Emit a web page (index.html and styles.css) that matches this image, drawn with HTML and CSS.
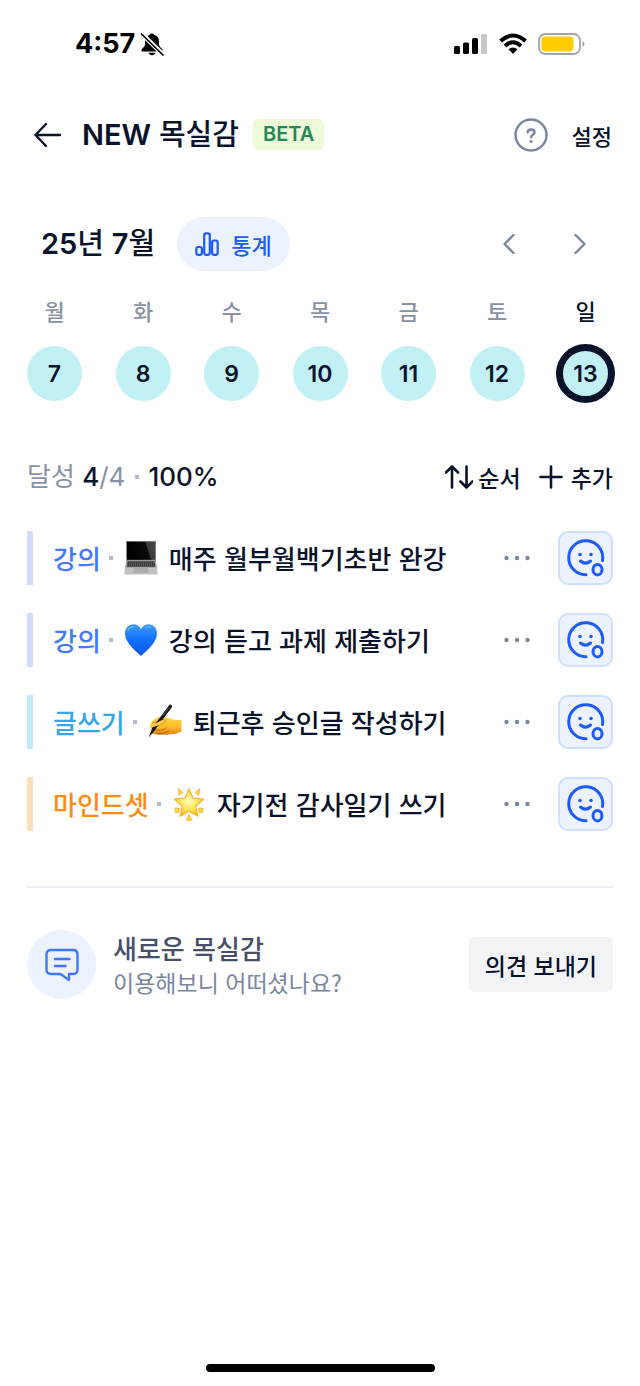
FILE: index.html
```html
<!DOCTYPE html>
<html lang="ko">
<head>
<meta charset="utf-8">
<meta name="viewport" content="width=device-width, initial-scale=1">
<title>NEW 목실감</title>
<link rel="stylesheet" href="styles.css">
</head>
<body>
<svg class="defs" width="0" height="0" aria-hidden="true">
  <defs>
    <linearGradient id="g-heart" x1="0" y1="0" x2="0" y2="1"><stop offset="0" stop-color="#3f9bff"/><stop offset=".45" stop-color="#1573fb"/><stop offset="1" stop-color="#0a55ee"/></linearGradient>
    <linearGradient id="g-hand" x1="0" y1="0" x2="0" y2="1"><stop offset="0" stop-color="#ffd84a"/><stop offset=".6" stop-color="#fdb925"/><stop offset="1" stop-color="#dd8412"/></linearGradient>
    <radialGradient id="g-star" cx=".5" cy=".45" r=".55"><stop offset="0" stop-color="#fffbc4"/><stop offset=".55" stop-color="#ffe75a"/><stop offset="1" stop-color="#f9b81f"/></radialGradient>
    <linearGradient id="g-screen" x1="0" y1="0.2" x2="1" y2="0"><stop offset="0" stop-color="#000"/><stop offset=".66" stop-color="#0b0b0b"/><stop offset=".67" stop-color="#3a3a3c"/><stop offset="1" stop-color="#4a4a4c"/></linearGradient>
    <symbol id="face" viewBox="0 0 40 40">
      <g fill="none" stroke="#1d5bff" stroke-width="3" stroke-linecap="round">
        <path d="M20 36.700A17 17 0 1 1 36.500 22.500"/>
        <path d="M14.500 23Q19.500 27.300 24.500 23"/>
        <ellipse cx="31.500" cy="31.700" rx="4.500" ry="5.200"/>
      </g>
      <circle cx="14" cy="16.500" r="1.800" fill="#1d5bff"/><circle cx="25" cy="16.500" r="1.800" fill="#1d5bff"/>
    </symbol>
    <symbol id="dots" viewBox="0 0 28 8"><g fill="#7b859c"><circle cx="3.500" cy="4" r="2.200"/><circle cx="14" cy="4" r="2.200"/><circle cx="24.500" cy="4" r="2.200"/></g></symbol>
  </defs>
</svg>
<div class="screen">
  <div class="status">
    <div class="status-left">
      <span class="time">4:57</span>
      <svg width="24" height="24" viewBox="0 0 24 24" aria-hidden="true"><path d="M12 1.500c-.9 0-1.700.5-2.100 1.300C6.600 3.700 5 6.300 5 9.500v2.700c0 2.300-1.800 3.300-3.300 5-.9 1-.5 2.200.9 2.200h18.800c1.400 0 1.800-1.200.9-2.200-1.500-1.700-3.300-2.700-3.300-5V9.500c0-3.200-1.600-5.800-4.900-6.700-.4-.8-1.200-1.300-2.100-1.300zM8.500 20.800h7c-.5 1.600-1.900 2.400-3.500 2.400s-3-.8-3.500-2.400z"/><path d="M1.500 1.500L24 23.500" stroke="#fff" stroke-width="4.500"/><path d="M1.500 2L23 23" stroke="#000" stroke-width="1.700" stroke-linecap="round"/></svg>
    </div>
    <div class="status-right">
      <svg width="34" height="22" viewBox="0 0 34 22" aria-hidden="true"><rect x="0" y="13" width="6" height="8" rx="1.500"/><rect x="9" y="9.500" width="6" height="11.500" rx="1.500"/><rect x="18" y="5" width="6" height="16" rx="1.500"/><rect x="27" y="1" width="6" height="20" rx="1.500" fill="#c8c8ca"/></svg>
      <svg width="28" height="22" viewBox="0 0 28 22" aria-hidden="true"><g fill="none" stroke="#000" stroke-width="4"><path d="M1.500 8Q14-3 26.500 8"/><path d="M6 13Q14 5.500 22 13"/></g><path d="M9.500 16.200Q14 12.800 18.500 16.200L14 21z"/></svg>
      <svg width="48" height="22" viewBox="0 0 48 22" aria-hidden="true"><rect x="1" y="1" width="41" height="20" rx="6.500" fill="none" stroke="#a3a3a8" stroke-width="1.800"/><rect x="3.500" y="3.500" width="32" height="15" rx="4" fill="#ffcc00"/><path d="M44.500 8q2 1 2 3t-2 3z" fill="#a3a3a8"/></svg>
    </div>
  </div>

  <header class="header">
    <button class="back" aria-label="뒤로"><svg width="28" height="26" viewBox="0 0 28 26"><path d="M26 13H1.500M12 2L1.500 13 12 24" fill="none" stroke="#0b132b" stroke-width="2.400" stroke-linecap="round" stroke-linejoin="round"/></svg></button>
    <h1 class="title"><b>NEW</b> 목실감</h1>
    <span class="badge">BETA</span>
    <button class="help" aria-label="도움말"><svg width="34" height="34" viewBox="0 0 34 34"><g fill="none" stroke="#7b86a0" stroke-width="2.400" stroke-linecap="round" stroke-linejoin="round"><circle cx="17" cy="17" r="15.500"/><path d="M13.700 14.500c.1-1.900 1.500-3 3.400-3s3.400 1.200 3.400 2.900c0 2.300-3.400 2.300-3.400 4.800"/></g><circle cx="17" cy="23.500" r="1.500" fill="#7b86a0"/></svg></button>
    <button class="settings hangul">설정</button>
  </header>

  <main class="content">
    <div class="month">
      <h2 class="month-name"><b>25</b>년 <b>7</b>월</h2>
      <button class="stats hangul"><svg width="24" height="24" viewBox="0 0 24 24" aria-hidden="true"><g fill="none" stroke="#1d5bff" stroke-width="2.200"><rect x="1.300" y="15" width="5.600" height="7.800" rx="2"/><rect x="9.200" y="1.300" width="5.600" height="21.500" rx="2"/><rect x="17.100" y="8.500" width="5.600" height="14.300" rx="2"/></g></svg>통계</button>
      <div class="arrows">
        <button aria-label="이전 주"><svg width="12" height="20" viewBox="0 0 12 20"><path d="M10.500 1L1.500 10l9 9" /></svg></button>
        <button aria-label="다음 주"><svg width="12" height="20" viewBox="0 0 12 20"><path d="M1.500 1l9 9-9 9"/></svg></button>
      </div>
    </div>

    <div class="week">
      <div class="day"><span>월</span><button>7</button></div>
      <div class="day"><span>화</span><button>8</button></div>
      <div class="day"><span>수</span><button>9</button></div>
      <div class="day"><span>목</span><button>10</button></div>
      <div class="day"><span>금</span><button>11</button></div>
      <div class="day"><span>토</span><button>12</button></div>
      <div class="day today"><span>일</span><button aria-current="date">13</button></div>
    </div>

    <div class="summary">
      <p class="progress"><span>달성 <b>4</b>/4</span><i class="dot"></i><b>100%</b></p>
      <button class="tool order hangul"><svg width="28" height="24" viewBox="0 0 28 24" aria-hidden="true"><path d="M7 22.500V1.500M1 7.500l6-6 6 6M21.500 1.500v21M15.500 16.500l6 6 6-6"/></svg>순서</button>
      <button class="tool add hangul"><svg width="24" height="24" viewBox="0 0 24 24" aria-hidden="true"><path d="M12 1.500v21M1.500 12h21"/></svg>추가</button>
    </div>

    <ul class="tasks hangul">
      <li class="task lecture">
        <span class="cat">강의</span><i class="dot"></i>
        <svg class="emoji" viewBox="0 0 34 36" role="img" aria-label="노트북"><path d="M2 1h30v21H2z" fill="#8a8a8c"/><path d="M3 1.800h28.200v18H3z" fill="url(#g-screen)"/><path d="M2.200 20.500h29.600l1.400 9H.8z" fill="#a9a9ab"/><path d="M3.500 21.300h27l.9 5.500H2.600z" fill="#37373a"/><path d="M3.300 23h27.500M3 25h28" stroke="#a0a0a3" stroke-width=".7" stroke-dasharray="1 1"/><path d="M.9 28h32.200l.5 5.700q0 .8-.8.8H1.200q-.8 0-.8-.8z" fill="#c2c2c4"/><path d="M10 28h14l.7 5H9.300z" fill="#adadb0"/></svg>
        <span class="name">매주 월부월백기초반 완강</span>
        <button class="more" aria-label="더보기"><svg><use href="#dots"/></svg></button>
        <button class="mood" aria-label="달성 완료"><svg><use href="#face"/></svg></button>
      </li>
      <li class="task lecture">
        <span class="cat">강의</span><i class="dot"></i>
        <svg class="emoji" viewBox="0 0 34 36" role="img" aria-label="파란 하트"><path d="M17 34C12 29 1 21 1 11.500 1 6 4.800 2.200 9.400 2.200c3.200 0 6 1.800 7.600 5 1.600-3.200 4.400-5 7.600-5C29.200 2.200 33 6 33 11.500 33 21 22 29 17 34z" fill="url(#g-heart)"/><path d="M4 8.500q1.700-3.700 5.500-3.700M22 5.700q2-1.200 4.500-.6" fill="none" stroke="#8cc4ff" stroke-width="1.500" stroke-linecap="round" opacity=".6"/></svg>
        <span class="name">강의 듣고 과제 제출하기</span>
        <button class="more" aria-label="더보기"><svg><use href="#dots"/></svg></button>
        <button class="mood" aria-label="달성 완료"><svg><use href="#face"/></svg></button>
      </li>
      <li class="task writing">
        <span class="cat">글쓰기</span><i class="dot"></i>
        <svg class="emoji" viewBox="0 0 34 36" role="img" aria-label="글 쓰는 손"><path d="M2.500 24C1 17.500 8 13 14 12.500c3-.4 6 1.500 9 2.500 3.500 1 7 .8 10.500 1v11.500c-3 .8-4.500 2.300-8 2.500-3 .5-5.500.8-9.500.8-5 0-11.500.2-12.300-2.500-.4-1.300 1-1.800 1-2.300z" fill="url(#g-hand)"/><path d="M5 18.500c5-.5 7.500-3 10.500-3.200 2.500.3 2 3.500-.5 4.200-3.500 1-6 3.500-10.500 4.500" fill="#ffd54c" stroke="#c97914" stroke-width=".9" stroke-linecap="round"/><path d="M7.500 25.500c4 1.800 8 .6 10.500-1.800M8 29.500q7 1.500 13-2.500" fill="none" stroke="#b96812" stroke-width="1" stroke-linecap="round"/><path d="M22.300 2.400L5.500 25" stroke="#17171a" stroke-width="3.400" stroke-linecap="round"/><path d="M4.300 24l3 2.100-6.700 7.400z" fill="#17171a"/><path d="M21 3.400L15 11.500" stroke="#55555a" stroke-width=".9"/><path d="M3 20.500c5-.5 8-3.700 11.500-4.300 2.300.4 1.500 3-1 3.800-3.200 1-5 2.500-9 3.200" fill="#ffcb3e"/></svg>
        <span class="name">퇴근후 승인글 작성하기</span>
        <button class="more" aria-label="더보기"><svg><use href="#dots"/></svg></button>
        <button class="mood" aria-label="달성 완료"><svg><use href="#face"/></svg></button>
      </li>
      <li class="task mindset">
        <span class="cat">마인드셋</span><i class="dot"></i>
        <svg class="emoji" viewBox="0 0 34 36" role="img" aria-label="빛나는 별"><path d="M17 3l4 9 10.500 1.200-7.800 7 2.200 10L17 25.300l-8.900 4.900 2.200-10-7.800-7L13 12z" fill="url(#g-star)" stroke="#f4b32b" stroke-width="1.200" stroke-linejoin="round"/><g fill="#ffd63c" stroke="#f5aa20" stroke-width=".7" stroke-linejoin="round"><path d="M6 2.500l5 4-3.800 2.700zM28 2.500l-5 4 3.800 2.700zM17 28.500l2.600 5.500q-2.600 1.500-5.200 0zM2.800 22.200l4.700-.2-.8 4.500-3 .3zM31.200 22.200l-4.700-.2.8 4.500 3 .3z"/></g></svg>
        <span class="name">자기전 감사일기 쓰기</span>
        <button class="more" aria-label="더보기"><svg><use href="#dots"/></svg></button>
        <button class="mood" aria-label="달성 완료"><svg><use href="#face"/></svg></button>
      </li>
    </ul>

    <section class="feedback hangul">
      <span class="bubble"><svg width="34" height="34" viewBox="0 0 34 34" aria-hidden="true"><g fill="none" stroke="#3f78ff" stroke-width="2.400" stroke-linecap="round" stroke-linejoin="round"><path d="M6 2h22q4.500 0 4.500 4.500v15Q32.500 26 28 26h-4v6l-8.500-6H6q-4.500 0-4.500-4.500v-15Q1.500 2 6 2z"/><path d="M10 11h14.500M10 18h10.500"/></g></svg></span>
      <div class="feedback-text">
        <strong>새로운 목실감</strong>
        <span>이용해보니 어떠셨나요?</span>
      </div>
      <button class="send">의견 보내기</button>
    </section>
  </main>
  <div class="home"></div>
</div>
</body>
</html>
```
FILE: styles.css
```css
* { box-sizing: border-box; }
body {
  margin: 0;
  background: #fff;
  color: #0b132b;
  font-family: Inter, "Noto Sans CJK KR", sans-serif;
  font-size: 24px;
  font-weight: 500;
}
h1, h2, p, ul { margin: 0; padding: 0; }
svg { display: block; flex: none; }
.defs { position: absolute; }
button {
  margin: 0;
  padding: 0;
  border: 0;
  background: none;
  color: inherit;
  font: inherit;
  cursor: pointer;
  display: flex;
  align-items: center;
  justify-content: center;
  white-space: nowrap;
}
.hangul { font-family: "Noto Sans CJK KR", Inter, sans-serif; line-height: 32px; }
.screen { min-height: 100vh; display: flex; flex-direction: column; }

.status {
  height: 88px;
  padding: 0 54px 0 75px;
  display: flex;
  align-items: center;
  justify-content: space-between;
  color: #000;
}
.status-left { display: flex; align-items: center; gap: 5px; }
.status-right { display: flex; align-items: center; gap: 11px; }
.time { font-size: 27px; font-weight: 700; line-height: 32px; }

.header {
  height: 93px;
  padding: 0 28px 0 34px;
  display: flex;
  align-items: center;
}
.title { margin-left: 20px; font-size: 29px; font-weight: 500; line-height: 40px; white-space: nowrap; }
.title b, .month-name b { font-weight: 600; }
.badge {
  margin-left: 14px;
  padding: 0 10px;
  border-radius: 6px;
  background: #edfad8;
  color: #23875a;
  font-size: 20px;
  font-weight: 600;
  line-height: 31px;
}
.help { margin-left: auto; }
.settings { margin-left: 24px; font-size: 22px; }

.content { padding: 36px 27px 0; }
.month { display: flex; align-items: center; padding-left: 14px; }
.month-name { font-size: 29px; font-weight: 500; line-height: 40px; white-space: nowrap; }
.stats {
  margin-left: 22px;
  height: 54px;
  padding: 0 18px;
  gap: 12px;
  border-radius: 27px;
  background: #edf2ff;
  color: #1d5bff;
  font-size: 22px;
}
.arrows { display: flex; gap: 59px; margin-left: auto; padding-right: 27px; }
.arrows path { fill: none; stroke: #7b86a0; stroke-width: 2.4px; stroke-linecap: round; stroke-linejoin: round; }

.week { display: flex; justify-content: space-between; margin-top: 25px; }
.day { width: 55px; display: flex; flex-direction: column; align-items: center; gap: 18px; }
.day span { color: #8a92a6; font-size: 22px; line-height: 32px; }
.day button {
  width: 55px;
  height: 55px;
  border-radius: 50%;
  background: #c1f0f5;
  font-size: 23px;
  font-weight: 600;
}
.today span { color: #0b132b; }
.today button { outline: 7px solid #0b132b; outline-offset: -5px; }

.summary { display: flex; align-items: center; margin-top: 56px; }
.progress { display: flex; align-items: center; color: #8a92a6; font-size: 26px; font-weight: 400; line-height: 40px; margin-right: auto; white-space: nowrap; }
.progress b { color: #0b132b; font-weight: 500; }
.progress .dot { margin: 0 9px 0 10px; }
.dot { flex: none; width: 4px; height: 4px; background: #b3bac8; }
.tool { font-size: 23px; }
.tool path { fill: none; stroke: #0b132b; stroke-width: 2.6px; stroke-linecap: round; stroke-linejoin: round; }
.order { gap: 5px; }
.add { gap: 8px; margin-left: 18px; }

.tasks { list-style: none; display: flex; flex-direction: column; gap: 28px; margin-top: 34px; }
.task { height: 54px; display: flex; align-items: center; border-left: 6px solid; padding-left: 20px; white-space: nowrap; font-size: 26px; }
.cat { margin-right: 8px; }
.lecture { border-color: #d1dcff; }
.lecture .cat { color: #4379ff; }
.writing { border-color: #c1eaff; }
.writing .cat { color: #36a5eb; }
.mindset { border-color: #ffdfb8; }
.mindset .cat { color: #fa8c0f; }
.emoji { width: 34px; height: 36px; margin: 0 11px; }
.more { margin-left: auto; }
.more svg { width: 28px; height: 8px; }
.mood {
  width: 55px;
  height: 54px;
  margin-left: 27px;
  border: 2px solid #d1dfff;
  border-radius: 10px;
  background: #edf2ff;
}
.mood svg { width: 40px; height: 40px; }

.feedback { display: flex; align-items: center; margin-top: 55px; padding-top: 42px; border-top: 2px solid #eceef3; }
.bubble { width: 69px; height: 69px; border-radius: 50%; background: #edf2ff; display: flex; align-items: center; justify-content: center; }
.feedback-text { margin-left: 17px; display: flex; flex-direction: column; white-space: nowrap; }
.feedback-text strong { color: #475069; font-size: 26px; font-weight: 500; line-height: 34px; }
.feedback-text span { color: #7b86a0; font-size: 23px; font-weight: 400; line-height: 34px; }
.send { margin-left: auto; height: 55px; padding: 0 16px; border-radius: 6px; background: #f2f3f5; font-size: 23px; }

.home { width: 229px; height: 8px; margin: auto auto 14px; border-radius: 4px; background: #000; }
```
